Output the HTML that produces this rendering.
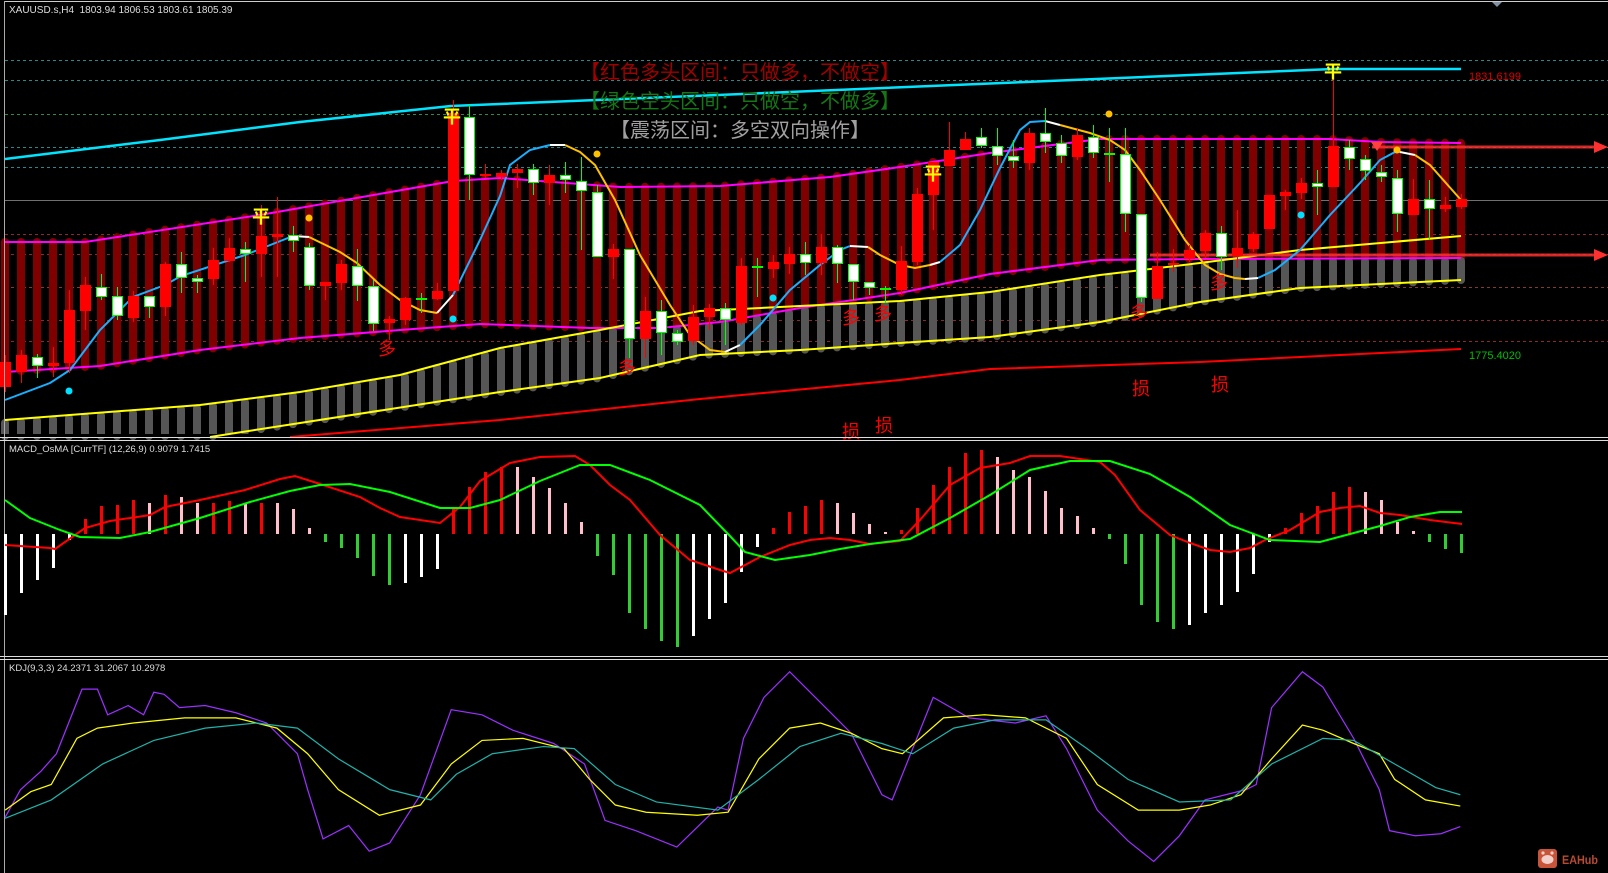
<!DOCTYPE html>
<html><head><meta charset="utf-8"><style>
html,body{margin:0;padding:0;background:#000;width:1608px;height:873px;overflow:hidden}
svg{display:block}
text{font-family:"Liberation Sans","Noto Sans CJK SC",sans-serif}
</style></head><body>
<svg id="s" width="1608" height="873" viewBox="0 0 1608 873" xmlns="http://www.w3.org/2000/svg">
<rect width="1608" height="873" fill="#000"/>
<g id="grid"></g>
<g id="cols"></g>
<g id="lines"></g>
<g id="cand"></g>
<g id="marks"></g>
<text x="9" y="13" font-size="10" fill="#ddd">XAUUSD.s,H4&#160;&#160;1803.94 1806.53 1803.61 1805.39</text>
<text x="740" y="79" font-size="20" fill="#a00000" text-anchor="middle" font-family="Liberation Sans,'Noto Sans CJK SC',sans-serif">【红色多头区间：只做多，不做空】</text>
<text x="740" y="108" font-size="20" fill="#147814" text-anchor="middle">【绿色空头区间：只做空，不做多】</text>
<text x="740" y="137" font-size="20" fill="#a0a0a0" text-anchor="middle">【震荡区间：多空双向操作】</text>
<text x="1469" y="80" font-size="11" fill="#e00000" font-family="Liberation Serif,serif">1831.6199</text>
<text x="1469" y="359" font-size="11" fill="#00c000" font-family="Liberation Serif,serif">1775.4020</text>
<polygon points="1491,1 1503,1 1497,7" fill="#8090a0"/>
<g fill="#f00" font-size="18" font-family="'Noto Sans CJK SC',sans-serif">
<text x="378" y="355">多</text><text x="618" y="374">多</text><text x="842" y="324">多</text><text x="874" y="320">多</text><text x="1130" y="319">多</text><text x="1210" y="289">多</text>
<text x="1132" y="395">损</text><text x="1211" y="391">损</text><text x="842" y="438">损</text><text x="875" y="432">损</text>
</g>
<g fill="#ff0" font-size="18" font-weight="bold" font-family="'Noto Sans CJK SC',sans-serif" text-anchor="middle">
<text x="261" y="223">平</text><text x="452" y="123">平</text><text x="933" y="180">平</text><text x="1333" y="78">平</text>
</g>
<rect x="4" y="1" width="1604" height="1" fill="#ccc"/>
<rect x="4" y="1" width="1" height="872" fill="#aaa"/>
<rect x="0" y="437" width="1608" height="1" fill="#ddd"/>
<rect x="0" y="440" width="1608" height="1" fill="#ddd"/>
<rect x="0" y="656" width="1608" height="1" fill="#ddd"/>
<rect x="0" y="659" width="1608" height="1" fill="#ddd"/>
<g id="macd"></g>
<text x="9" y="452" font-size="9.5" fill="#ddd">MACD_OsMA [CurrTF] (12,26,9) 0.9079 1.7415</text>
<g id="kdj" transform="scale(1.02551)"></g>
<text x="9" y="671" font-size="9.5" fill="#ddd">KDJ(9,3,3) 24.2371 31.2067 10.2978</text>
<rect x="1538" y="849" width="19" height="19" rx="3" fill="#c8553a"/>
<ellipse cx="1547.5" cy="859.5" rx="6" ry="4.5" fill="#f0d0c8"/>
<circle cx="1543" cy="853" r="1.6" fill="#f0d0c8"/><circle cx="1552" cy="853" r="1.6" fill="#f0d0c8"/>
<text x="1562" y="864" font-size="12" font-weight="bold" fill="#b84a33" font-family="Liberation Serif,serif" textLength="36" lengthAdjust="spacingAndGlyphs">EAHub</text>
</svg>
<script>
var NS="http://www.w3.org/2000/svg";
function el(p,t,a){var e=document.createElementNS(NS,t);for(var k in a)e.setAttribute(k,a[k]);document.getElementById(p).appendChild(e);return e;}
function pl(p,pts,c,w,extra){var a={points:pts.map(function(q){return q[0]+","+q[1]}).join(" "),fill:"none",stroke:c,"stroke-width":w||2};if(extra)for(var k in extra)a[k]=extra[k];return el(p,"polyline",a);}
function interp(P,x){if(x<=P[0][0])return P[0][1];for(var i=1;i<P.length;i++){if(x<=P[i][0]){var t=(x-P[i-1][0])/(P[i][0]-P[i-1][0]);return P[i-1][1]+t*(P[i][1]-P[i-1][1]);}}return P[P.length-1][1];}
[[60,"#2a8a8a"],[80,"#2a8a8a"],[114,"#2f8a4a"],[147,"#2a8a8a"],[167,"#2a8a8a"],[234,"#8a2a2a"],[254,"#8a2a2a"],[287,"#8a3a2a"],[320,"#8a2a2a"],[341,"#8a2a2a"]].forEach(function(g){el("grid","line",{x1:5,x2:1608,y1:g[0]+.5,y2:g[0]+.5,stroke:g[1],"stroke-dasharray":"3,3","stroke-width":1});});
el("grid","line",{x1:5,x2:1608,y1:200.5,y2:200.5,stroke:"#707070","stroke-width":1});
var uM=[[5,242],[85,242],[260,215],[453,181],[500,178],[620,187],[720,186],[830,177],[900,167],[990,153],[1100,139],[1330,139],[1380,142],[1461,143]];
var lM=[[5,372],[100,366],[200,350],[300,338],[400,330],[480,324],[590,328],[660,328],[720,322],[800,308],[900,293],[990,274],[1100,260],[1200,259],[1461,258]];
var uY=[[5,420],[200,405],[300,392],[400,375],[500,348],[600,330],[700,311],[800,306],[900,301],[990,292],[1100,275],[1200,263],[1300,250],[1461,236]];
var lY=[[210,437],[500,392],[600,378],[700,355],[800,350],[900,343],[990,337],[1100,322],[1200,302],[1300,288],[1461,280]];
lY.unshift([5,470]);
var rL=[[290,437],[500,420],[700,399],[900,380],[990,369],[1200,362],[1461,349]];
var cy=[[5,159],[160,140],[300,122],[451,106],[718,95],[1025,82],[1333,69],[1461,69]];
for(var i=0;i<92;i++){var x=5+16*i;var t=interp(uM,x),b=interp(lM,x);
 el("cols","line",{x1:x,x2:x,y1:t,y2:b,stroke:"#800000","stroke-width":8,"stroke-linecap":"round"});
 var gt=Math.max(b,interp(uY,x)),gb=Math.min(436,interp(lY,x));
 if(gb>gt)el("cols","line",{x1:x,x2:x,y1:gt+3,y2:gb,stroke:"#565656","stroke-width":8,"stroke-linecap":"round"});}
el("cols","rect",{x:0,y:434,width:1608,height:3,fill:"#000"});
pl("lines",cy,"#00e5ff",2.5);pl("lines",uM,"#ff00ff",2);pl("lines",lM,"#ff00ff",2);pl("lines",uY,"#ffff00",2);pl("lines",lY.slice(1),"#ffff00",2);pl("lines",rL,"#ff0000",2);
el("lines","line",{x1:1372,x2:1596,y1:147,y2:147,stroke:"#ff3030","stroke-width":3,opacity:.85});
el("lines","polygon",{points:"1594,141 1608,147 1594,153",fill:"#ff3030"});
el("lines","line",{x1:1150,x2:1596,y1:255,y2:255,stroke:"#ff3030","stroke-width":3,opacity:.85});
el("lines","polygon",{points:"1594,249 1608,255 1594,261",fill:"#ff3030"});
el("lines","polygon",{points:"1371,142 1383,142 1377,151",fill:"#ff4040"});
var segs=[["#1ab0ff",[[5,400],[50,383],[70,370],[100,330],[133,297],[165,285],[181,276],[245,255],[293,236]]],["#fff",[[293,236],[309,237]]],["#ffc000",[[309,237],[340,252],[357,263],[380,285],[400,300],[420,310],[437,313]]],["#fff",[[437,313],[453,295]]],["#1ab0ff",[[453,295],[480,240],[500,196],[510,165],[530,150],[550,145]]],["#fff",[[550,145],[565,145]]],["#ffc000",[[565,145],[580,152],[595,165],[615,200],[640,255],[670,305],[690,335],[710,350],[725,352]]],["#fff",[[725,352],[740,345]]],["#1ab0ff",[[740,345],[760,325],[790,290],[820,265],[840,250],[850,246]]],["#fff",[[850,246],[868,247]]],["#ffc000",[[868,247],[880,255],[900,265],[915,268],[930,265]]],["#fff",[[930,265],[940,262]]],["#1ab0ff",[[940,262],[960,245],[980,210],[1000,168],[1020,130],[1030,122],[1045,121]]],["#fff",[[1045,121],[1060,125]]],["#ffc000",[[1060,125],[1090,133],[1110,140],[1125,150],[1140,170],[1160,200],[1185,240],[1205,265],[1220,274],[1235,278],[1245,279]]],["#fff",[[1245,279],[1258,278]]],["#1ab0ff",[[1258,278],[1275,270],[1300,250],[1330,215],[1360,183],[1380,160],[1395,152],[1400,152]]],["#fff",[[1400,152],[1415,155]]],["#ffc000",[[1415,155],[1430,165],[1461,200]]]];
segs.forEach(function(s){pl("lines",s[1],s[0],2);});
[[309,218],[597,154],[1109,114],[1397,150]].forEach(function(p){el("marks","circle",{cx:p[0],cy:p[1],r:3.5,fill:"#ffc000"});});
[[69,391],[453,319],[773,298],[1301,215]].forEach(function(p){el("marks","circle",{cx:p[0],cy:p[1],r:3.5,fill:"#00e0ff"});});
var C=[["r",362,387,355,392],["r",355,372,350,383],["w",357,366,354,378],["r",363,366,347,377],["r",310,363,290,373],["r",285,311,277,330],["w",287,297,274,300],["w",296,316,287,320],["r",296,318,291,322],["w",296,307,296,318],
["r",264,307,262,316],["w",264,278,252,293],["w",278,282,275,293],["r",260,279,248,285],["r",248,261,238,262],["w",249,254,242,282],["r",236,254,205,277],["r",234,237,197,277],["w",235,241,226,252],["w",247,286,243,290],
["r",282,286,282,300],["r",264,283,260,290],["w",266,286,249,301],["w",286,324,280,331],["r",319,323,316,340],["r",298,320,297,325],["g",299,299,293,313],["r",291,299,283,300],["r",113,291,100,291],["w",117,175,105,200],
["r",174,176,164,178],["r",173,177,170,180],["r",169,173,164,188],["w",169,183,164,195],["r",175,183,165,205],["w",175,180,162,193],["w",181,191,157,250],["w",192,257,185,257],["r",249,257,244,279],["w",249,339,249,358],
["r",311,339,297,358],["w",311,333,300,355],["w",333,342,330,345],["r",317,341,305,345],["r",308,317,304,330],["w",308,320,303,345],["r",266,323,258,325],["g",267,267,258,297],["r",262,269,255,278],["r",254,264,247,274],
["w",254,263,242,275],["r",247,263,234,275],["w",247,264,245,283],["w",264,282,264,300],["w",282,288,282,295],["g",289,289,286,303],["r",261,290,246,295],["r",194,262,188,265],["r",162,195,162,230],["r",150,166,122,166],
["r",139,150,132,150],["w",137,146,128,148],["w",146,156,128,165],["w",156,161,140,168],["r",133,163,128,170],["w",133,142,108,153],["w",143,156,135,163],["r",135,157,128,160],["w",137,153,125,158],["g",154,154,128,182],
["w",154,214,128,232],["w",214,298,214,302],["r",266,299,252,299],["r",263,264,249,272],["r",250,259,245,262],["r",233,251,230,258],["w",233,257,226,270],["r",248,256,210,268],["r",234,249,232,252],["r",195,229,195,229],
["r",192,196,190,210],["r",183,193,178,199],["w",183,187,170,215],["r",146,187,70,187],["w",147,159,140,170],["w",159,171,155,180],["w",172,177,165,182],["w",178,214,170,232],["r",199,215,179,215],["w",199,209,180,240],
["r",205,209,197,212],["r",199,207,194,209]];
C.forEach(function(c,i){var x=5+16*i;var col=c[0]=="r"?"#ff0000":"#00ff00";
 el("cand","line",{x1:x+.5,x2:x+.5,y1:c[3],y2:c[4],stroke:col,"stroke-width":1});
 if(c[0]=="r")el("cand","rect",{x:x-5,y:c[1],width:11,height:Math.max(2,c[2]-c[1]),fill:"#ff0000"});
 else if(c[0]=="w")el("cand","rect",{x:x-4.5,y:c[1]+.5,width:10,height:Math.max(2,c[2]-c[1]-1),fill:"#fff",stroke:"#00ff00","stroke-width":1});
 else el("cand","rect",{x:x-5,y:c[1]-1,width:11,height:2,fill:"#00ff00"});});
var H=[615,593,580,568,540,519,506,505,500,503,495,497,503,503,501,503,503,503,509,528,542,548,558,576,585,583,577,569,508,487,472,467,467,477,488,503,522,556,575,613,629,641,647,636,619,603,572,547,528,512,506,500,503,513,524,532,530,508,485,467,453,450,457,470,477,491,508,516,528,539,564,605,622,629,625,613,605,592,574,542,528,513,506,492,487,492,500,522,531,542,549,553];
var HC="wwwwwrrrrprpprrprppp"+"gggggwwwrrrrpppppgggggg"+"www"+"wwrrrrpppprrrrrrpppppppgggggwwwwwwrrrrrppppggg";
var cm={w:"#fff",r:"#ff0000",p:"#ffc0cb",g:"#32cd32"};
H.forEach(function(v,i){var x=5+16*i;var y1=Math.min(534,v),y2=Math.max(534,v);el("macd","rect",{x:x-1,y:y1,width:3,height:Math.max(1,y2-y1),fill:cm[HC[i]]||"#fff"});});
pl("macd",[[5,545],[50,548],[55,549],[85,528],[110,521],[150,515],[165,507],[200,500],[245,490],[280,479],[295,476],[320,484],[360,497],[380,508],[400,517],[440,523],[460,507],[480,481],[510,463],[540,457],[575,456],[590,465],[610,485],[630,500],[660,535],[690,560],[720,570],[730,573],[760,557],[790,545],[810,540],[830,538],[850,540],[870,544],[900,541],[920,520],[950,485],[980,468],[1010,463],[1030,456],[1060,456],[1100,462],[1115,475],[1140,510],[1170,535],[1190,543],[1210,550],[1230,552],[1250,548],[1265,540],[1290,530],[1320,512],[1340,508],[1360,506],[1380,513],[1400,515],[1430,520],[1462,524]],"#ff0000",2);
pl("macd",[[5,500],[30,518],[60,530],[80,537],[120,538],[150,532],[200,518],[250,502],[290,491],[320,485],[350,484],[390,492],[440,508],[470,508],[500,500],[540,481],[580,465],[610,465],[650,480],[700,505],[730,536],[745,552],[775,560],[810,555],[840,549],[870,544],[910,539],[950,518],[990,495],[1030,470],[1070,461],[1110,461],[1150,474],[1190,497],[1230,525],[1270,540],[1320,542],[1350,534],[1380,526],[1410,517],[1440,512],[1462,512]],"#00ff00",2);
pl("kdj",[[5,797],[20,770],[40,752],[55,735],[80,672],[95,672],[105,697],[125,688],[140,697],[150,675],[160,677],[175,690],[200,688],[230,695],[260,705],[290,735],[300,770],[315,818],[340,805],[360,830],[380,822],[410,775],[440,692],[470,697],[500,712],[540,725],[570,745],[590,800],[620,810],[660,826],[700,787],[710,790],[725,720],[745,680],[770,655],[790,675],[810,695],[830,715],[860,775],[870,780],[880,755],[910,680],[945,700],[990,705],[1020,698],[1040,730],[1070,790],[1100,820],[1125,840],[1150,815],[1175,780],[1195,775],[1215,770],[1225,765],[1240,690],[1270,655],[1290,670],[1320,720],[1345,770],[1355,810],[1380,815],[1405,813],[1424,806]],"#9b30ff",1.2);
pl("kdj",[[5,790],[30,772],[50,765],[75,720],[95,710],[130,705],[180,700],[230,700],[270,710],[300,735],[330,770],[370,795],[410,785],[440,745],[470,722],[510,720],[550,730],[575,760],[600,785],[630,792],[680,795],[710,792],[740,740],[770,710],[800,705],[830,715],[860,730],[880,735],[920,700],[960,697],[1000,700],[1040,720],[1070,765],[1110,790],[1150,790],[1180,785],[1210,775],[1240,740],[1270,707],[1290,712],[1320,725],[1345,735],[1360,760],[1390,780],[1424,786]],"#ffff00",1.2);
pl("kdj",[[5,798],[50,780],[100,745],[150,722],[200,710],[250,705],[290,710],[330,740],[380,770],[420,780],[445,755],[480,735],[530,728],[560,730],[600,765],[640,782],[700,790],[740,760],[780,728],[820,715],[860,725],[890,735],[930,710],[970,702],[1020,702],[1060,730],[1100,760],[1150,782],[1200,780],[1240,745],[1290,720],[1320,722],[1360,745],[1400,768],[1424,775]],"#20b2aa",1.2);
</script>
</body></html>
